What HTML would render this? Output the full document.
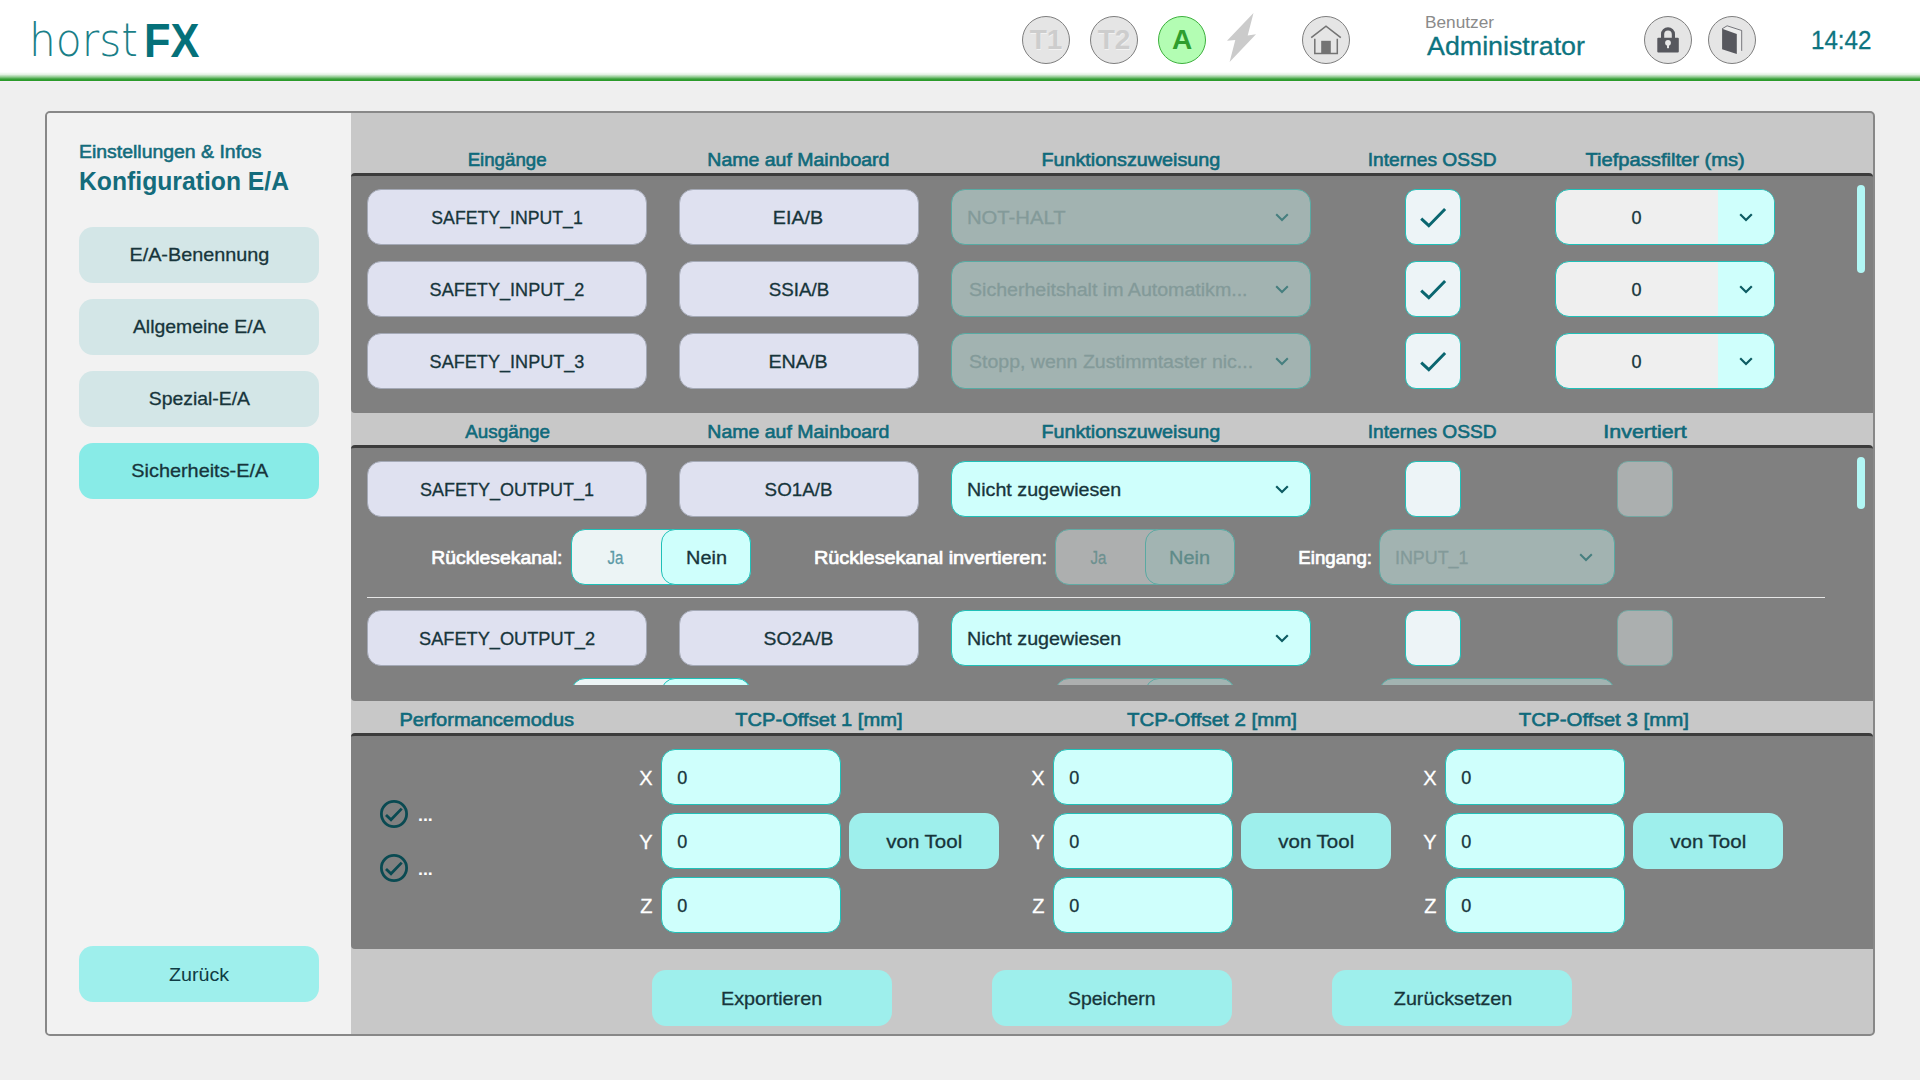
<!DOCTYPE html>
<html lang="de">
<head>
<meta charset="utf-8">
<title>horstFX - Konfiguration E/A</title>
<style>
html,body{margin:0;padding:0}
body{width:1920px;height:1080px;overflow:hidden;position:relative;background:#efefef;font-family:"Liberation Sans",sans-serif;}
body>div,body>svg{position:absolute;box-sizing:border-box}
.t{white-space:nowrap;}
.hdr{left:0;top:0;width:1920px;height:82px;background:linear-gradient(#fff 0,#fff 72px,#e3f1e3 74.5px,#8fca8f 77px,#3ca23c 79px,#2b9b2b 80px,#2b9b2b 81px,#f6eef6 81px,#f6eef6 82px)}
.frame{left:45px;top:111px;width:1830px;height:925px;border:2px solid #888;border-radius:5px;background:#c8c8c8}
.side{left:47px;top:113px;width:304px;height:921px;background:#f2f2f2;border-radius:3px 0 0 3px}
.sb{background:#d3e6e7;border-radius:14px}
.sb.act{background:#88ebe7}
.btn{background:#9eefec;border-radius:14px}
.dk{background:#808080;border-top:3px solid #3c3c3c;border-radius:4px 4px 0 4px}
.ro{background:#dfe1f0;border:1px solid #a4a9b6;border-radius:14px}
.seld{background:#a2b3b1;border:1px solid #58aaa3;border-radius:14px}
.sela{background:#cffffc;border:1px solid #1fc0b8;border-radius:14px}
.inp{background:#cffffc;border:1px solid #1fc0b8;border-radius:14px}
.cb{background:#edf4f7;border:1px solid #1fc0b8;border-radius:11px}
.cbd{background:#abafaf;border:1px solid #74a7a2;border-radius:11px}
.tp{background:#efefef;border:1px solid #1fc0b8;border-radius:14px;overflow:hidden}
.tpr{position:absolute;left:162px;top:0;width:58px;height:56px;background:#cffffc}
.tg{background:#ecf4f5;border:1px solid #1fc0b8;border-radius:14px}
.tgr{position:absolute;left:89px;top:-1px;width:90px;height:56px;box-sizing:border-box;background:#cffffc;border:1px solid #1fc0b8;border-radius:14px}
.tgd{background:#adafaf;border:1px solid #62aaa4;border-radius:14px}
.tgdr{position:absolute;left:89px;top:-1px;width:90px;height:56px;box-sizing:border-box;background:#a2b4b2;border:1px solid #5aa9a2;border-radius:14px}
.scr{background:#b2f7f5;border-radius:4px}
.circ{width:48px;height:48px;top:16px;border-radius:50%;background:#e5e5e5;border:1.5px solid #7e7e7e}
.mode{font-weight:700;font-size:28px;line-height:46.5px;text-align:center;color:#cdcdcd;text-shadow:0.5px 0.5px 0 #f2f2f2}
.mode.a{background:#b3fdb3;border-color:#3db03d;color:#2e9e2e;text-shadow:none}
</style>
</head>
<body>
<div class="hdr"></div>
<div class="frame"></div>
<div class="side"></div>
<div class="circ mode" style="left:1022px">T1</div>
<div class="circ mode" style="left:1090px">T2</div>
<div class="circ mode a" style="left:1158px">A</div>
<svg style="left:1220px;top:8px" width="44" height="60" viewBox="1220 8 44 60"><polygon points="1253.5,13 1247.7,35.6 1256,34.3 1229.6,62 1235.3,40.1 1227,40.8" fill="#cbcbcb"/></svg>
<div class="circ" style="left:1302px"></div>
<svg style="left:1302px;top:16px" width="48" height="48" viewBox="1302 16 48 48"><path d="M1311.2 37.6 L1326 26.2 L1340.8 37.6" fill="none" stroke="#737373" stroke-width="1.6"/><path d="M1314.8 38.8 V53.6 H1337.3 V38.8" fill="none" stroke="#737373" stroke-width="1.5"/><rect x="1321.2" y="40.8" width="9.6" height="12.8" fill="#737373"/></svg>
<div class="circ" style="left:1644px"></div>
<svg style="left:1644px;top:16px" width="48" height="48" viewBox="1644 16 48 48"><path d="M1662.6 38 V34.2 A5.4 5.4 0 0 1 1673.4 34.2 V38" fill="none" stroke="#57585e" stroke-width="3.2"/><rect x="1657.3" y="37.8" width="21.5" height="14.8" rx="1" fill="#57585e"/><circle cx="1668" cy="42.8" r="2.9" fill="#e8e8e8"/><rect x="1667" y="43" width="2" height="5.2" fill="#e8e8e8"/></svg>
<div class="circ" style="left:1708px"></div>
<svg style="left:1708px;top:16px" width="48" height="48" viewBox="1708 16 48 48"><polygon points="1722.1,28.8 1727.1,25.8 1741.7,30.5 1741.7,50.9 1736.8,54" fill="#ececec"/><path d="M1722.1 28.8 L1727.1 25.8 L1741.7 30.5 V50.9" fill="none" stroke="#57585e" stroke-width="0.8" stroke-linejoin="round"/><polygon points="1722.1,28.8 1736.8,34 1736.8,54 1722.1,49.3" fill="#57585e"/></svg>

<div class="sb" style="left:79px;top:227px;width:240px;height:56px;"></div>
<div class="sb" style="left:79px;top:299px;width:240px;height:56px;"></div>
<div class="sb" style="left:79px;top:371px;width:240px;height:56px;"></div>
<div class="sb act" style="left:79px;top:443px;width:240px;height:56px;"></div>
<div class="btn" style="left:79px;top:946px;width:240px;height:56px;"></div>
<div class="dk" style="left:351px;top:173px;width:1522px;height:240px;"></div>
<div class="dk" style="left:351px;top:445px;width:1522px;height:256px;"></div>
<div class="dk" style="left:351px;top:733px;width:1522px;height:216px;"></div>
<div class="ro" style="left:367px;top:189px;width:280px;height:56px;"></div>
<div class="ro" style="left:679px;top:189px;width:240px;height:56px;"></div>
<div class="seld" style="left:951px;top:189px;width:360px;height:56px;"></div>
<svg class="ic" style="left:1275px;top:212.8px" width="14" height="9" viewBox="0 0 14 9"><path d="M1.2 1.2 L7 7 L12.8 1.2" fill="none" stroke="#467f7f" stroke-width="2.0" stroke-linecap="butt" stroke-linejoin="miter"/></svg>
<div class="cb" style="left:1405px;top:189px;width:56px;height:56px;"><svg width="54" height="54" viewBox="0 0 54 54" style="position:absolute;left:0;top:0"><path d="M15.2 28.7 L22.8 35.7 L39.1 19" fill="none" stroke="#0a6670" stroke-width="3"/></svg></div>
<div class="tp" style="left:1555px;top:189px;width:220px;height:56px;"><div class="tpr"></div></div>
<svg class="ic" style="left:1739px;top:212.8px" width="14" height="9" viewBox="0 0 14 9"><path d="M1.2 1.2 L7 7 L12.8 1.2" fill="none" stroke="#0d5c63" stroke-width="2.2" stroke-linecap="butt" stroke-linejoin="miter"/></svg>
<div class="ro" style="left:367px;top:261px;width:280px;height:56px;"></div>
<div class="ro" style="left:679px;top:261px;width:240px;height:56px;"></div>
<div class="seld" style="left:951px;top:261px;width:360px;height:56px;"></div>
<svg class="ic" style="left:1275px;top:284.8px" width="14" height="9" viewBox="0 0 14 9"><path d="M1.2 1.2 L7 7 L12.8 1.2" fill="none" stroke="#467f7f" stroke-width="2.0" stroke-linecap="butt" stroke-linejoin="miter"/></svg>
<div class="cb" style="left:1405px;top:261px;width:56px;height:56px;"><svg width="54" height="54" viewBox="0 0 54 54" style="position:absolute;left:0;top:0"><path d="M15.2 28.7 L22.8 35.7 L39.1 19" fill="none" stroke="#0a6670" stroke-width="3"/></svg></div>
<div class="tp" style="left:1555px;top:261px;width:220px;height:56px;"><div class="tpr"></div></div>
<svg class="ic" style="left:1739px;top:284.8px" width="14" height="9" viewBox="0 0 14 9"><path d="M1.2 1.2 L7 7 L12.8 1.2" fill="none" stroke="#0d5c63" stroke-width="2.2" stroke-linecap="butt" stroke-linejoin="miter"/></svg>
<div class="ro" style="left:367px;top:333px;width:280px;height:56px;"></div>
<div class="ro" style="left:679px;top:333px;width:240px;height:56px;"></div>
<div class="seld" style="left:951px;top:333px;width:360px;height:56px;"></div>
<svg class="ic" style="left:1275px;top:356.8px" width="14" height="9" viewBox="0 0 14 9"><path d="M1.2 1.2 L7 7 L12.8 1.2" fill="none" stroke="#467f7f" stroke-width="2.0" stroke-linecap="butt" stroke-linejoin="miter"/></svg>
<div class="cb" style="left:1405px;top:333px;width:56px;height:56px;"><svg width="54" height="54" viewBox="0 0 54 54" style="position:absolute;left:0;top:0"><path d="M15.2 28.7 L22.8 35.7 L39.1 19" fill="none" stroke="#0a6670" stroke-width="3"/></svg></div>
<div class="tp" style="left:1555px;top:333px;width:220px;height:56px;"><div class="tpr"></div></div>
<svg class="ic" style="left:1739px;top:356.8px" width="14" height="9" viewBox="0 0 14 9"><path d="M1.2 1.2 L7 7 L12.8 1.2" fill="none" stroke="#0d5c63" stroke-width="2.2" stroke-linecap="butt" stroke-linejoin="miter"/></svg>
<div class="scr" style="left:1857px;top:185px;width:8px;height:88px;"></div>
<div class="scr" style="left:1857px;top:457px;width:8px;height:52px;"></div>
<div class="ro" style="left:367px;top:461px;width:280px;height:56px;"></div>
<div class="ro" style="left:679px;top:461px;width:240px;height:56px;"></div>
<div class="sela" style="left:951px;top:461px;width:360px;height:56px;"></div>
<svg class="ic" style="left:1275px;top:484.8px" width="14" height="9" viewBox="0 0 14 9"><path d="M1.2 1.2 L7 7 L12.8 1.2" fill="none" stroke="#0d5c63" stroke-width="2.2" stroke-linecap="butt" stroke-linejoin="miter"/></svg>
<div class="cb" style="left:1405px;top:461px;width:56px;height:56px;"></div>
<div class="cbd" style="left:1617px;top:461px;width:56px;height:56px;"></div>
<div class="tg" style="left:571px;top:529px;width:180px;height:56px;"><div class="tgr"></div></div>
<div class="tgd" style="left:1055px;top:529px;width:180px;height:56px;"><div class="tgdr"></div></div>
<div class="seld" style="left:1379px;top:529px;width:236px;height:56px;"></div>
<svg class="ic" style="left:1579px;top:552.8px" width="14" height="9" viewBox="0 0 14 9"><path d="M1.2 1.2 L7 7 L12.8 1.2" fill="none" stroke="#467f7f" stroke-width="2.0" stroke-linecap="butt" stroke-linejoin="miter"/></svg>
<div class="" style="left:367px;top:597px;width:1458px;height:1px;background:#e6e6e6"></div>
<div class="ro" style="left:367px;top:610px;width:280px;height:56px;"></div>
<div class="ro" style="left:679px;top:610px;width:240px;height:56px;"></div>
<div class="sela" style="left:951px;top:610px;width:360px;height:56px;"></div>
<svg class="ic" style="left:1275px;top:633.8px" width="14" height="9" viewBox="0 0 14 9"><path d="M1.2 1.2 L7 7 L12.8 1.2" fill="none" stroke="#0d5c63" stroke-width="2.2" stroke-linecap="butt" stroke-linejoin="miter"/></svg>
<div class="cb" style="left:1405px;top:610px;width:56px;height:56px;"></div>
<div class="cbd" style="left:1617px;top:610px;width:56px;height:56px;"></div>
<div class="tg" style="left:571px;top:678px;width:180px;height:56px;clip-path:inset(0 0 49px 0);"><div class="tgr"></div></div>
<div class="tgd" style="left:1055px;top:678px;width:180px;height:56px;clip-path:inset(0 0 49px 0);"><div class="tgdr"></div></div>
<div class="seld" style="left:1379px;top:678px;width:236px;height:56px;clip-path:inset(0 0 49px 0);"></div>
<svg class="ic" style="left:379px;top:799px" width="30" height="30" viewBox="-15 -15 30 30"><circle r="12.6" fill="none" stroke="#0a4a52" stroke-width="2.8"/><path d="M-8 0.9 L-3 5.7 L7.7 -5.4" fill="none" stroke="#0a4a52" stroke-width="2.8"/></svg>
<svg class="ic" style="left:379px;top:853px" width="30" height="30" viewBox="-15 -15 30 30"><circle r="12.6" fill="none" stroke="#0a4a52" stroke-width="2.8"/><path d="M-8 0.9 L-3 5.7 L7.7 -5.4" fill="none" stroke="#0a4a52" stroke-width="2.8"/></svg>
<div class="inp" style="left:661px;top:749px;width:180px;height:56px;"></div>
<div class="inp" style="left:661px;top:813px;width:180px;height:56px;"></div>
<div class="inp" style="left:661px;top:877px;width:180px;height:56px;"></div>
<div class="btn" style="left:849px;top:813px;width:150px;height:56px;"></div>
<div class="inp" style="left:1053px;top:749px;width:180px;height:56px;"></div>
<div class="inp" style="left:1053px;top:813px;width:180px;height:56px;"></div>
<div class="inp" style="left:1053px;top:877px;width:180px;height:56px;"></div>
<div class="btn" style="left:1241px;top:813px;width:150px;height:56px;"></div>
<div class="inp" style="left:1445px;top:749px;width:180px;height:56px;"></div>
<div class="inp" style="left:1445px;top:813px;width:180px;height:56px;"></div>
<div class="inp" style="left:1445px;top:877px;width:180px;height:56px;"></div>
<div class="btn" style="left:1633px;top:813px;width:150px;height:56px;"></div>
<div class="btn" style="left:652px;top:970px;width:240px;height:56px;"></div>
<div class="btn" style="left:992px;top:970px;width:240px;height:56px;"></div>
<div class="btn" style="left:1332px;top:970px;width:240px;height:56px;"></div>
<div class="t" style="top:140.50px;line-height:23px;font-size:18px;font-weight:400;color:#146c7c;-webkit-text-stroke:0.55px #146c7c;left:78.62px;transform-origin:0 50%;transform:scaleX(1.0796);">Einstellungen &amp; Infos</div>
<div class="t" style="top:164.50px;line-height:32px;font-size:25px;font-weight:700;color:#146c7c;left:78.71px;transform-origin:0 50%;transform:scaleX(0.9885);">Konfiguration E/A</div>
<div class="t" style="top:243.20px;line-height:24px;font-size:18.5px;font-weight:400;color:#17353b;-webkit-text-stroke:0.3px #17353b;left:134.00px;transform:scaleX(1.0700);">E/A-Benennung</div>
<div class="t" style="top:315.20px;line-height:24px;font-size:18.5px;font-weight:400;color:#17353b;-webkit-text-stroke:0.3px #17353b;left:136.11px;transform:scaleX(1.0492);">Allgemeine E/A</div>
<div class="t" style="top:387.20px;line-height:24px;font-size:18.5px;font-weight:400;color:#17353b;-webkit-text-stroke:0.3px #17353b;left:151.03px;transform:scaleX(1.0471);">Spezial-E/A</div>
<div class="t" style="top:459.20px;line-height:24px;font-size:18.5px;font-weight:400;color:#17353b;-webkit-text-stroke:0.3px #17353b;left:135.60px;transform:scaleX(1.0737);">Sicherheits-E/A</div>
<div class="t" style="top:961.80px;line-height:25px;font-size:19px;font-weight:400;color:#0f3c44; left:169.71px;transform:scaleX(1.0347);">Zurück</div>
<div class="t" style="top:147.50px;line-height:24px;font-size:18.5px;font-weight:400;color:#106a7b;-webkit-text-stroke:0.6px #106a7b;left:467.55px;transform:scaleX(1.0092);">Eingänge</div>
<div class="t" style="top:147.50px;line-height:24px;font-size:18.5px;font-weight:400;color:#106a7b;-webkit-text-stroke:0.6px #106a7b;left:712.45px;transform:scaleX(1.0538);">Name auf Mainboard</div>
<div class="t" style="top:147.50px;line-height:24px;font-size:18.5px;font-weight:400;color:#106a7b;-webkit-text-stroke:0.6px #106a7b;left:1047.01px;transform:scaleX(1.0671);">Funktionszuweisung</div>
<div class="t" style="top:147.50px;line-height:24px;font-size:18.5px;font-weight:400;color:#106a7b;-webkit-text-stroke:0.6px #106a7b;left:1370.26px;transform:scaleX(1.0361);">Internes OSSD</div>
<div class="t" style="top:147.50px;line-height:24px;font-size:18.5px;font-weight:400;color:#106a7b;-webkit-text-stroke:0.6px #106a7b;left:1592.44px;transform:scaleX(1.0880);">Tiefpassfilter (ms)</div>
<div class="t" style="top:419.50px;line-height:24px;font-size:18.5px;font-weight:400;color:#106a7b;-webkit-text-stroke:0.6px #106a7b;left:465.69px;transform:scaleX(1.0177);">Ausgänge</div>
<div class="t" style="top:419.50px;line-height:24px;font-size:18.5px;font-weight:400;color:#106a7b;-webkit-text-stroke:0.6px #106a7b;left:712.45px;transform:scaleX(1.0538);">Name auf Mainboard</div>
<div class="t" style="top:419.50px;line-height:24px;font-size:18.5px;font-weight:400;color:#106a7b;-webkit-text-stroke:0.6px #106a7b;left:1047.01px;transform:scaleX(1.0671);">Funktionszuweisung</div>
<div class="t" style="top:419.50px;line-height:24px;font-size:18.5px;font-weight:400;color:#106a7b;-webkit-text-stroke:0.6px #106a7b;left:1370.26px;transform:scaleX(1.0361);">Internes OSSD</div>
<div class="t" style="top:419.50px;line-height:24px;font-size:18.5px;font-weight:400;color:#106a7b;-webkit-text-stroke:0.6px #106a7b;left:1608.52px;transform:scaleX(1.1577);">Invertiert</div>
<div class="t" style="top:707.50px;line-height:24px;font-size:18.5px;font-weight:400;color:#106a7b;-webkit-text-stroke:0.6px #106a7b;left:405.68px;transform:scaleX(1.0819);">Performancemodus</div>
<div class="t" style="top:707.50px;line-height:24px;font-size:18.5px;font-weight:400;color:#106a7b;-webkit-text-stroke:0.6px #106a7b;left:742.40px;transform:scaleX(1.0871);">TCP-Offset 1 [mm]</div>
<div class="t" style="top:707.50px;line-height:24px;font-size:18.5px;font-weight:400;color:#106a7b;-webkit-text-stroke:0.6px #106a7b;left:1135.01px;transform:scaleX(1.1047);">TCP-Offset 2 [mm]</div>
<div class="t" style="top:707.50px;line-height:24px;font-size:18.5px;font-weight:400;color:#106a7b;-webkit-text-stroke:0.6px #106a7b;left:1526.91px;transform:scaleX(1.1067);">TCP-Offset 3 [mm]</div>
<div class="t" style="top:206.90px;line-height:23px;font-size:18px;font-weight:400;color:#17353b;-webkit-text-stroke:0.3px #17353b;left:429.98px;transform:scaleX(0.9829);">SAFETY_INPUT_1</div>
<div class="t" style="top:206.90px;line-height:23px;font-size:18px;font-weight:400;color:#17353b;-webkit-text-stroke:0.3px #17353b;left:775.45px;transform:scaleX(1.0930);">EIA/B</div>
<div class="t" style="top:206.90px;line-height:23px;font-size:18px;font-weight:400;color:#839a99;-webkit-text-stroke:0.3px #839a99;left:967.38px;transform-origin:0 50%;transform:scaleX(1.1249);">NOT-HALT</div>
<div class="t" style="top:206.90px;line-height:23px;font-size:18px;font-weight:400;color:#17353b;-webkit-text-stroke:0.3px #17353b;left:1631.50px;transform:scaleX(1.0000);">0</div>
<div class="t" style="top:278.90px;line-height:23px;font-size:18px;font-weight:400;color:#17353b;-webkit-text-stroke:0.3px #17353b;left:429.98px;transform:scaleX(1.0050);">SAFETY_INPUT_2</div>
<div class="t" style="top:278.90px;line-height:23px;font-size:18px;font-weight:400;color:#17353b;-webkit-text-stroke:0.3px #17353b;left:769.99px;transform:scaleX(1.0428);">SSIA/B</div>
<div class="t" style="top:278.90px;line-height:23px;font-size:18px;font-weight:400;color:#839a99;-webkit-text-stroke:0.3px #839a99;left:968.50px;transform-origin:0 50%;transform:scaleX(1.0875);">Sicherheitshalt im Automatikm...</div>
<div class="t" style="top:278.90px;line-height:23px;font-size:18px;font-weight:400;color:#17353b;-webkit-text-stroke:0.3px #17353b;left:1631.50px;transform:scaleX(1.0000);">0</div>
<div class="t" style="top:350.90px;line-height:23px;font-size:18px;font-weight:400;color:#17353b;-webkit-text-stroke:0.3px #17353b;left:429.98px;transform:scaleX(1.0050);">SAFETY_INPUT_3</div>
<div class="t" style="top:350.90px;line-height:23px;font-size:18px;font-weight:400;color:#17353b;-webkit-text-stroke:0.3px #17353b;left:771.45px;transform:scaleX(1.0941);">ENA/B</div>
<div class="t" style="top:350.90px;line-height:23px;font-size:18px;font-weight:400;color:#839a99;-webkit-text-stroke:0.3px #839a99;left:968.50px;transform-origin:0 50%;transform:scaleX(1.0839);">Stopp, wenn Zustimmtaster nic...</div>
<div class="t" style="top:350.90px;line-height:23px;font-size:18px;font-weight:400;color:#17353b;-webkit-text-stroke:0.3px #17353b;left:1631.50px;transform:scaleX(1.0000);">0</div>
<div class="t" style="top:478.90px;line-height:23px;font-size:18px;font-weight:400;color:#17353b;-webkit-text-stroke:0.3px #17353b;left:419.98px;transform:scaleX(0.9993);">SAFETY_OUTPUT_1</div>
<div class="t" style="top:478.90px;line-height:23px;font-size:18px;font-weight:400;color:#17353b;-webkit-text-stroke:0.3px #17353b;left:766.49px;transform:scaleX(1.0427);">SO1A/B</div>
<div class="t" style="top:478.90px;line-height:23px;font-size:18px;font-weight:400;color:#17353b;-webkit-text-stroke:0.3px #17353b;left:967.41px;transform-origin:0 50%;transform:scaleX(1.0930);">Nicht zugewiesen</div>
<div class="t" style="top:546.10px;line-height:24px;font-size:18.5px;font-weight:400;color:#fff;-webkit-text-stroke:0.7px #fff;left:436.54px;transform-origin:100% 50%;transform:scaleX(1.0461);">Rücklesekanal:</div>
<div class="t" style="top:546.90px;line-height:23px;font-size:18px;font-weight:400;color:#5d9aa6;-webkit-text-stroke:0.3px #5d9aa6;left:606.08px;transform:scaleX(0.8350);">Ja</div>
<div class="t" style="top:546.90px;line-height:23px;font-size:18px;font-weight:400;color:#17353b;-webkit-text-stroke:0.3px #17353b;left:687.50px;transform:scaleX(1.1026);">Nein</div>
<div class="t" style="top:546.10px;line-height:24px;font-size:18.5px;font-weight:400;color:#fff;-webkit-text-stroke:0.7px #fff;left:830.26px;transform-origin:100% 50%;transform:scaleX(1.0743);">Rücklesekanal invertieren:</div>
<div class="t" style="top:546.90px;line-height:23px;font-size:18px;font-weight:400;color:#6e9190;-webkit-text-stroke:0.3px #6e9190;left:1089.08px;transform:scaleX(0.8350);">Ja</div>
<div class="t" style="top:546.90px;line-height:23px;font-size:18px;font-weight:400;color:#5f8b89;-webkit-text-stroke:0.3px #5f8b89;left:1171.00px;transform:scaleX(1.1026);">Nein</div>
<div class="t" style="top:546.10px;line-height:24px;font-size:18.5px;font-weight:400;color:#fff;-webkit-text-stroke:0.7px #fff;left:1298.62px;transform-origin:100% 50%;transform:scaleX(1.0086);">Eingang:</div>
<div class="t" style="top:546.90px;line-height:23px;font-size:18px;font-weight:400;color:#839a99;-webkit-text-stroke:0.3px #839a99;left:1395.01px;transform-origin:0 50%;transform:scaleX(0.9930);">INPUT_1</div>
<div class="t" style="top:627.90px;line-height:23px;font-size:18px;font-weight:400;color:#17353b;-webkit-text-stroke:0.3px #17353b;left:419.98px;transform:scaleX(1.0113);">SAFETY_OUTPUT_2</div>
<div class="t" style="top:627.90px;line-height:23px;font-size:18px;font-weight:400;color:#17353b;-webkit-text-stroke:0.3px #17353b;left:766.49px;transform:scaleX(1.0750);">SO2A/B</div>
<div class="t" style="top:627.90px;line-height:23px;font-size:18px;font-weight:400;color:#17353b;-webkit-text-stroke:0.3px #17353b;left:967.41px;transform-origin:0 50%;transform:scaleX(1.0930);">Nicht zugewiesen</div>
<div class="t" style="top:805.00px;line-height:22px;font-size:17px;font-weight:700;color:#fff;left:418.16px;transform-origin:0 50%;transform:scaleX(1.0445);">...</div>
<div class="t" style="top:859.00px;line-height:22px;font-size:17px;font-weight:700;color:#fff;left:418.16px;transform-origin:0 50%;transform:scaleX(1.0445);">...</div>
<div class="t" style="top:764.60px;line-height:26px;font-size:20px;font-weight:400;color:#fff;-webkit-text-stroke:0.3px #fff;left:639.30px;transform-origin:100% 50%;transform:scaleX(1.0000);">X</div>
<div class="t" style="top:766.90px;line-height:23px;font-size:18px;font-weight:400;color:#17353b;-webkit-text-stroke:0.3px #17353b;left:677.30px;transform-origin:0 50%;transform:scaleX(1.0000);">0</div>
<div class="t" style="top:828.60px;line-height:26px;font-size:20px;font-weight:400;color:#fff;-webkit-text-stroke:0.3px #fff;left:639.30px;transform-origin:100% 50%;transform:scaleX(1.0000);">Y</div>
<div class="t" style="top:830.90px;line-height:23px;font-size:18px;font-weight:400;color:#17353b;-webkit-text-stroke:0.3px #17353b;left:677.30px;transform-origin:0 50%;transform:scaleX(1.0000);">0</div>
<div class="t" style="top:892.60px;line-height:26px;font-size:20px;font-weight:400;color:#fff;-webkit-text-stroke:0.3px #fff;left:640.30px;transform-origin:100% 50%;transform:scaleX(1.0000);">Z</div>
<div class="t" style="top:894.90px;line-height:23px;font-size:18px;font-weight:400;color:#17353b;-webkit-text-stroke:0.3px #17353b;left:677.30px;transform-origin:0 50%;transform:scaleX(1.0000);">0</div>
<div class="t" style="top:828.90px;line-height:25px;font-size:19px;font-weight:400;color:#17353b;-webkit-text-stroke:0.3px #17353b;left:889.47px;transform:scaleX(1.0784);">von Tool</div>
<div class="t" style="top:764.60px;line-height:26px;font-size:20px;font-weight:400;color:#fff;-webkit-text-stroke:0.3px #fff;left:1031.30px;transform-origin:100% 50%;transform:scaleX(1.0000);">X</div>
<div class="t" style="top:766.90px;line-height:23px;font-size:18px;font-weight:400;color:#17353b;-webkit-text-stroke:0.3px #17353b;left:1069.30px;transform-origin:0 50%;transform:scaleX(1.0000);">0</div>
<div class="t" style="top:828.60px;line-height:26px;font-size:20px;font-weight:400;color:#fff;-webkit-text-stroke:0.3px #fff;left:1031.30px;transform-origin:100% 50%;transform:scaleX(1.0000);">Y</div>
<div class="t" style="top:830.90px;line-height:23px;font-size:18px;font-weight:400;color:#17353b;-webkit-text-stroke:0.3px #17353b;left:1069.30px;transform-origin:0 50%;transform:scaleX(1.0000);">0</div>
<div class="t" style="top:892.60px;line-height:26px;font-size:20px;font-weight:400;color:#fff;-webkit-text-stroke:0.3px #fff;left:1032.30px;transform-origin:100% 50%;transform:scaleX(1.0000);">Z</div>
<div class="t" style="top:894.90px;line-height:23px;font-size:18px;font-weight:400;color:#17353b;-webkit-text-stroke:0.3px #17353b;left:1069.30px;transform-origin:0 50%;transform:scaleX(1.0000);">0</div>
<div class="t" style="top:828.90px;line-height:25px;font-size:19px;font-weight:400;color:#17353b;-webkit-text-stroke:0.3px #17353b;left:1281.47px;transform:scaleX(1.0784);">von Tool</div>
<div class="t" style="top:764.60px;line-height:26px;font-size:20px;font-weight:400;color:#fff;-webkit-text-stroke:0.3px #fff;left:1423.30px;transform-origin:100% 50%;transform:scaleX(1.0000);">X</div>
<div class="t" style="top:766.90px;line-height:23px;font-size:18px;font-weight:400;color:#17353b;-webkit-text-stroke:0.3px #17353b;left:1461.30px;transform-origin:0 50%;transform:scaleX(1.0000);">0</div>
<div class="t" style="top:828.60px;line-height:26px;font-size:20px;font-weight:400;color:#fff;-webkit-text-stroke:0.3px #fff;left:1423.30px;transform-origin:100% 50%;transform:scaleX(1.0000);">Y</div>
<div class="t" style="top:830.90px;line-height:23px;font-size:18px;font-weight:400;color:#17353b;-webkit-text-stroke:0.3px #17353b;left:1461.30px;transform-origin:0 50%;transform:scaleX(1.0000);">0</div>
<div class="t" style="top:892.60px;line-height:26px;font-size:20px;font-weight:400;color:#fff;-webkit-text-stroke:0.3px #fff;left:1424.30px;transform-origin:100% 50%;transform:scaleX(1.0000);">Z</div>
<div class="t" style="top:894.90px;line-height:23px;font-size:18px;font-weight:400;color:#17353b;-webkit-text-stroke:0.3px #17353b;left:1461.30px;transform-origin:0 50%;transform:scaleX(1.0000);">0</div>
<div class="t" style="top:828.90px;line-height:25px;font-size:19px;font-weight:400;color:#17353b;-webkit-text-stroke:0.3px #17353b;left:1673.47px;transform:scaleX(1.0784);">von Tool</div>
<div class="t" style="top:985.80px;line-height:25px;font-size:19px;font-weight:400;color:#17353b;-webkit-text-stroke:0.3px #17353b;left:722.69px;transform:scaleX(1.0419);">Exportieren</div>
<div class="t" style="top:985.80px;line-height:25px;font-size:19px;font-weight:400;color:#17353b;-webkit-text-stroke:0.3px #17353b;left:1069.01px;transform:scaleX(1.0237);">Speichern</div>
<div class="t" style="top:985.80px;line-height:25px;font-size:19px;font-weight:400;color:#17353b;-webkit-text-stroke:0.3px #17353b;left:1395.77px;transform:scaleX(1.0381);">Zurücksetzen</div>
<div class="t" style="top:11.70px;line-height:21px;font-size:16.5px;font-weight:400;color:#8a8a8a;left:1425.25px;transform-origin:0 50%;transform:scaleX(1.0451);">Benutzer</div>
<div class="t" style="top:29.70px;line-height:33px;font-size:25.5px;font-weight:400;color:#0d7480;-webkit-text-stroke:0.3px #0d7480;left:1426.50px;transform-origin:0 50%;transform:scaleX(1.0516);">Administrator</div>
<div class="t" style="top:23.00px;line-height:34px;font-size:26px;font-weight:400;color:#0d7480;-webkit-text-stroke:0.3px #0d7480;left:1811.27px;transform-origin:0 50%;transform:scaleX(0.9276);">14:42</div>
<div class="t" style="top:8.40px;line-height:64px;font-size:49px;font-weight:700;color:#05717a;left:143.55px;transform-origin:0 50%;transform:scaleX(0.8843);">FX</div>
<div class="t" style="top:9.10px;line-height:61px;font-size:47px;font-weight:200;color:#1a7f88;font-family:'DejaVu Sans',sans-serif;left:29.19px;transform-origin:0 50%;transform:scaleX(0.9016);">horst</div>
</body>
</html>
